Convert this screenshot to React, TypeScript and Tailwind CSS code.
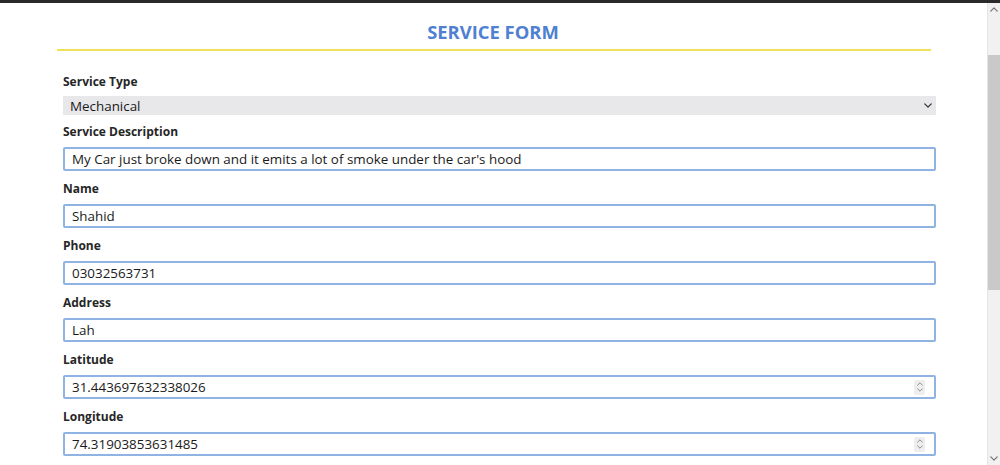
import React from 'react';

type Field = { label: string; value: string; numeric?: boolean };

const fields: Field[] = [
    { label: 'Service Description', value: "My Car just broke down and it emits a lot of smoke under the car's hood" },
    { label: 'Name', value: 'Shahid' },
    { label: 'Phone', value: '03032563731' },
    { label: 'Address', value: 'Lah' },
    { label: 'Latitude', value: '31.443697632338026', numeric: true },
    { label: 'Longitude', value: '74.31903853631485', numeric: true },
];

const Chevron: React.FC<{ up?: boolean; className?: string }> = ({ up, className }) => (
    <svg viewBox="0 0 10 6" className={className} fill="none" stroke="currentColor" strokeWidth={1.6} strokeLinecap="round" strokeLinejoin="round">
        <path d={up ? 'M1 5l4-4 4 4' : 'M1 1l4 4 4-4'} />
    </svg>
);

const Spinner: React.FC = () => (
    <div className="flex flex-col items-center justify-center gap-[2px] w-[11px] h-[15px] bg-[#eeeeee] rounded-[2px] text-[#8a8a8a]">
        <Chevron up className="w-[6px] h-[4px]" />
        <Chevron className="w-[6px] h-[4px]" />
    </div>
);

const Label: React.FC<{ children: React.ReactNode }> = ({ children }) => (
    <div className="h-4 leading-[18px] text-[12px] font-bold text-[#262626]">{children}</div>
);

const TextField: React.FC<{ field: Field }> = ({ field }) => (
    <div className="mb-[9px]">
        <Label>{field.label}</Label>
        <div className="mt-2 h-6 border-2 border-[#8fb3e2] rounded-[2px] bg-white flex items-center pl-[7px] pr-[9px]">
            <span className="flex-1 text-[13.4px] text-[#1a1a1a] leading-5 whitespace-nowrap">{field.value}</span>
            {field.numeric && <Spinner />}
        </div>
    </div>
);

export default function App() {
    return (
        <div className="w-[1000px] h-[465px] overflow-hidden bg-white flex flex-col" style={{ fontFamily: '"Open Sans", "Noto Sans", sans-serif' }}>
            <div className="h-[3px] bg-[#2a2a2a]" />
            <div className="flex-1 flex">
                <main className="flex-1">
                    <h1 className="mt-[17px] leading-6 text-center text-[18.4px] font-bold text-[#4f80d2] pr-[1px]">SERVICE FORM</h1>
                    <div className="mt-[5px] ml-[57px] w-[874px] h-[2px] bg-[#f1e05a]" />

                    <form className="ml-[63px] w-[873px] mt-[22px]">
                        <Label>Service Type</Label>
                        <div className="mt-[7px] h-[19px] bg-[#e8e8eb] flex items-center pl-[7px] pr-[4px]">
                            <span className="flex-1 text-[13.4px] text-[#1a1a1a] leading-5">Mechanical</span>
                            <Chevron className="w-[8px] h-[5px] text-[#333]" />
                        </div>
                        <div className="h-2" />
                        {fields.map((f) => (
                            <TextField key={f.label} field={f} />
                        ))}
                    </form>
                </main>

                {/* window scrollbar */}
                <div className="w-[13px] bg-[#f1f1f1] border-l border-[#e6e6e6] flex flex-col items-center">
                    <Chevron up className="mt-[4px] w-[8px] h-[5px] text-[#777]" />
                    <div className="mt-[43px] w-full h-[235px] bg-[#c9c9c9]" />
                    <div className="flex-1" />
                    <Chevron className="mb-[4px] w-[8px] h-[5px] text-[#777]" />
                </div>
            </div>
        </div>
    );
}
